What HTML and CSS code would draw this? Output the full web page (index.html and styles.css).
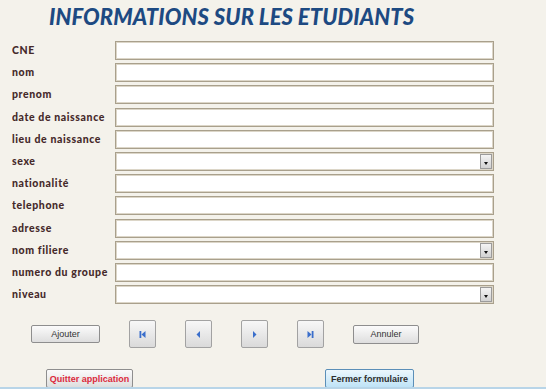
FILE: index.html
```html
<!DOCTYPE html>
<html lang="fr">

<head>
    <meta charset="UTF-8">
    <meta name="viewport" content="width=device-width, initial-scale=1.0">
    <title>Informations sur les etudiants</title>
    <link rel="stylesheet" href="styles.css">
</head>

<body>
    <div class="page">
        <h1 class="title">INFORMATIONS SUR LES ETUDIANTS</h1>

        <div class="form">
            <label>CNE</label>
            <div class="field"></div>
            <label>nom</label>
            <div class="field"></div>
            <label>prenom</label>
            <div class="field"></div>
            <label>date de naissance</label>
            <div class="field"></div>
            <label>lieu de naissance</label>
            <div class="field"></div>
            <label>sexe</label>
            <div class="field combo"><span class="arrow"></span></div>
            <label>nationalité</label>
            <div class="field"></div>
            <label>telephone</label>
            <div class="field"></div>
            <label>adresse</label>
            <div class="field"></div>
            <label>nom filiere</label>
            <div class="field combo"><span class="arrow"></span></div>
            <label>numero du groupe</label>
            <div class="field"></div>
            <label>niveau</label>
            <div class="field combo"><span class="arrow"></span></div>
        </div>

        <div class="actions">
            <button class="btn btn-text">Ajouter</button>
            <button class="btn btn-nav">
                <svg width="9" height="9" viewBox="0 0 9 9"><rect x="1.5" y="1" width="1.8" height="7" fill="#3a6ecb"/><path d="M7.5 1 L3.5 4.5 L7.5 8 Z" fill="#3a6ecb"/></svg>
            </button>
            <button class="btn btn-nav">
                <svg width="9" height="9" viewBox="0 0 9 9"><path d="M6 1 L2.5 4.5 L6 8 Z" fill="#3a6ecb"/></svg>
            </button>
            <button class="btn btn-nav">
                <svg width="9" height="9" viewBox="0 0 9 9"><path d="M3 1 L6.5 4.5 L3 8 Z" fill="#3a6ecb"/></svg>
            </button>
            <button class="btn btn-nav">
                <svg width="9" height="9" viewBox="0 0 9 9"><path d="M1.5 1 L5.5 4.5 L1.5 8 Z" fill="#3a6ecb"/><rect x="5.7" y="1" width="1.8" height="7" fill="#3a6ecb"/></svg>
            </button>
            <button class="btn btn-text btn-annuler">Annuler</button>
        </div>

        <div class="footer">
            <button class="btn btn-quit">Quitter application</button>
            <button class="btn btn-close">Fermer formulaire</button>
        </div>
    </div>
</body>

</html>
```

FILE: styles.css
```css
body {
    margin: 0;
    background-color: #f4f2eb;
    font-family: 'Lato', 'Liberation Sans', sans-serif;
}

.page {
    width: 546px;
    height: 389px;
    position: relative;
    overflow: hidden;
    border-bottom: 2px solid #b8d5e8;
    box-sizing: border-box;
}

.title {
    margin: 0;
    padding: 4px 0 0 49px;
    height: 36px;
    box-sizing: border-box;
    font-size: 22px;
    line-height: 26px;
    font-weight: 900;
    font-style: italic;
    color: #1d4a82;
    letter-spacing: 0.1px;
}

.form {
    display: grid;
    grid-template-columns: 103px 379px;
    grid-auto-rows: 19px;
    row-gap: 3.2px;
    margin: 5px 0 0 12px;
}

.form label {
    font-size: 10.5px;
    font-weight: 900;
    letter-spacing: 0.6px;
    color: #45292a;
    line-height: 19px;
    white-space: nowrap;
    overflow: hidden;
}

.field {
    position: relative;
    background-color: #ffffff;
    border: 1px solid #a9a08c;
    box-shadow: inset 0 0 0 1px #dcd6c8;
}

.arrow {
    position: absolute;
    right: 1px;
    top: 1px;
    bottom: 1px;
    width: 12px;
    background: linear-gradient(#f4f4f4, #d2d2d2);
    border: 1px solid #9b9b9b;
    box-sizing: border-box;
}

.arrow::after {
    content: '';
    position: absolute;
    left: 3px;
    top: 7px;
    border-left: 2.5px solid transparent;
    border-right: 2.5px solid transparent;
    border-top: 3px solid #111;
}

.actions {
    display: flex;
    align-items: center;
    gap: 29px;
    margin: 16px 0 0 31px;
    height: 28px;
}

.btn {
    margin: 0;
    padding: 0;
    font-family: 'Liberation Sans', Arial, sans-serif;
    background: linear-gradient(#fbfbfb, #dedede);
    border: 1px solid #8e8e8e;
    border-radius: 2px;
    color: #333;
    box-sizing: border-box;
}

.btn-text {
    width: 69px;
    height: 18px;
    font-size: 9px;
}

.btn-annuler {
    width: 66px;
    height: 19px;
}

.btn-nav {
    width: 27px;
    height: 28px;
    display: flex;
    align-items: center;
    justify-content: center;
    background: linear-gradient(#f7f7f7, #dadada);
    border-color: #a2a2a2;
}

.footer {
    display: flex;
    align-items: center;
    margin: 21px 0 0 46px;
}

.btn-quit {
    width: 87px;
    height: 19px;
    font-size: 9px;
    font-weight: 700;
    color: #dc2a3c;
}

.btn-close {
    width: 89px;
    height: 19px;
    margin-left: 192px;
    font-size: 9px;
    font-weight: 700;
    color: #2d2d2d;
    background: linear-gradient(#ecf7fd, #bfe3f7);
    border-color: #5b8fb8;
}
```
